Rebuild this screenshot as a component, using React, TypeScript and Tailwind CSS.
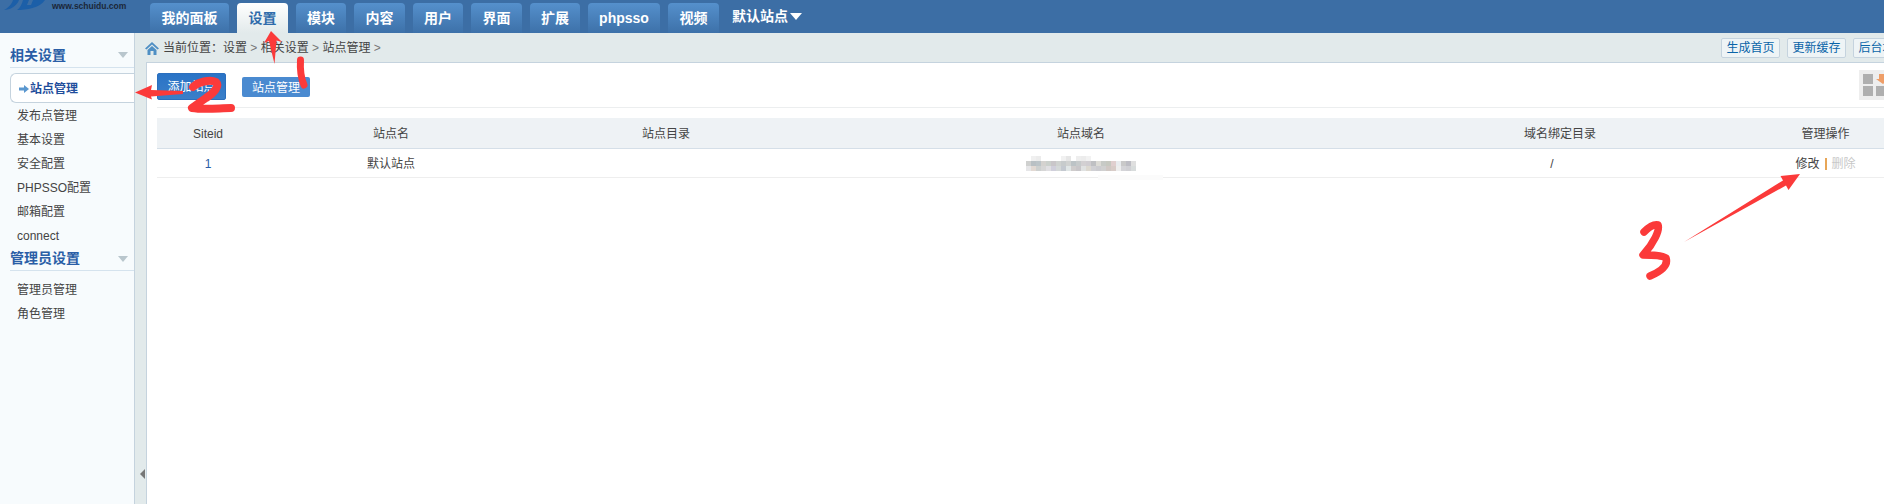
import React from "react";

const font = { fontFamily: '"Liberation Sans", "Noto Sans CJK SC", sans-serif' };

const tabs = [
  { label: "我的面板", w: "w-[79px]" },
  { label: "设置", w: "w-[51px]", active: true },
  { label: "模块", w: "w-[50px]" },
  { label: "内容", w: "w-[51px]" },
  { label: "用户", w: "w-[50px]" },
  { label: "界面", w: "w-[51px]" },
  { label: "扩展", w: "w-[50px]" },
  { label: "phpsso", w: "w-[72px]" },
  { label: "视频", w: "w-[51px]" },
];

const mosaic = [
  ["", "f0f0f0", "ececec", "", "", "", "", "f1f1f1", "e6e6e6", "", "eeeeee", "ececec", "f2f2f2", "", "", "", "", "", "", "", "", ""],
  ["cfd0cf", "b9c0c4", "bcc4c8", "d4d2cf", "cbd0cc", "c9c6c9", "cfd2d0", "c7cbcc", "d0d2d1", "bcc3c6", "c6cacb", "d3d0d2", "d0cdd1", "bfc0c3", "dcdbd6", "c7cac6", "c6c8c0", "e0cfcf", "e9ecef", "c9c9c9", "bdbdc4", "dfdfdf"],
  ["e6e6e8", "e2d9d3", "cdd0cf", "d6d6d6", "e0dfe2", "d0cfdb", "d4d8d8", "c4c9d0", "e0e6e6", "cfcccc", "c8c6c9", "e0e2e2", "dcd8d0", "d0d0d4", "ccccd0", "d0d0d0", "d0c8c4", "d8ccc8", "eeeeee", "d4d4d8", "d0d0d4", "d8dcdc"],
];

function Heading({ text, className }: { text: string; className: string }) {
  return (
    <div className={`flex justify-between items-center ml-[10px] border-b border-[#d5e3ee] ${className}`}>
      <span className="text-[14px] font-bold text-[#2a5ea6]">{text}</span>
      <span className="mr-[6px] w-0 h-0 border-x-[5.5px] border-x-transparent border-t-[6px] border-t-[#b9c6cd]" />
    </div>
  );
}

function Item({ text }: { text: string }) {
  return <div className="h-[24px] leading-[26px] pl-[17px] text-[12px] text-[#444]">{text}</div>;
}

const cols = "grid grid-cols-[102px_264px_286px_544px_414px_117px] w-[1727px] text-center text-[12px] text-[#444]";

export default function App() {
  return (
    <div style={font} className="relative w-[1884px] h-[504px] overflow-hidden bg-white flex flex-col">
      <header className="h-[33px] bg-[#3c6ea5] flex shrink-0">
        <div className="w-[150px] shrink-0 relative overflow-hidden">
          <svg className="absolute left-0 top-0" width="50" height="12" viewBox="0 0 50 12">
            <path d="M4 10 C10 10 17 6 19 0 L13 0 C12 4 8 8 4 10Z" fill="#1c5fa8" />
            <path d="M17 10 C26 10 40 8 45 0 L33 0 L31 5 L27 5 L29 0 L23 0 C22 4 20 8 17 10Z" fill="#1c5fa8" />
          </svg>
          <span className="absolute left-[52px] top-[1px] text-[8.5px] leading-[11px] font-bold text-[#1b2738] whitespace-nowrap">
            www.schuidu.com
          </span>
        </div>
        <nav className="flex items-end gap-[8px] h-full">
          {tabs.map((t) => (
            <div
              key={t.label}
              className={`${t.w} h-[30px] rounded-t-[4px] flex items-center justify-center text-[14px] font-bold ${
                t.active
                  ? "bg-gradient-to-b from-white to-[#e2eaeb] text-[#2f6cab]"
                  : "bg-gradient-to-b from-[#5590cc] to-[#3d71a9] text-white"
              }`}
            >
              {t.label}
            </div>
          ))}
          <div className="ml-[5px] h-[30px] pb-[4px] flex items-center gap-[2px] text-[14px] font-bold text-white">
            默认站点
            <span className="w-0 h-0 border-x-[6.5px] border-x-transparent border-t-[7px] border-t-white" />
          </div>
        </nav>
      </header>

      <div className="flex flex-1 min-h-0">
        <aside className="w-[135px] shrink-0 bg-[#f7fbfd] border-r border-[#c5d3de]">
          <Heading text="相关设置" className="h-[35px] pt-[10px]" />
          <div className="mt-[5px] ml-[10px] h-[30px] flex items-center bg-white border border-r-0 border-[#c5d3de] rounded-l-[6px] pl-[8px] pt-[1px] text-[12px] font-bold text-[#1f4e9c]">
            <svg width="10" height="8" viewBox="0 0 10 8" className="mr-[1px]">
              <path d="M0 2.5H5V0L10 4L5 8V5.5H0Z" fill="#5a97cf" />
            </svg>
            站点管理
          </div>
          <Item text="发布点管理" />
          <Item text="基本设置" />
          <Item text="安全配置" />
          <Item text="PHPSSO配置" />
          <Item text="邮箱配置" />
          <Item text="connect" />
          <Heading text="管理员设置" className="h-[24px]" />
          <div className="mt-[6px]">
            <Item text="管理员管理" />
            <Item text="角色管理" />
          </div>
        </aside>

        <div className="flex-1 min-w-0 flex flex-col bg-[#e2eaeb]">
          <div className="h-[29px] shrink-0 flex items-center justify-between pl-[10px]">
            <div className="flex items-center pt-[1px] text-[12px] text-[#444]">
              <svg width="14" height="13" viewBox="0 0 14 13" className="mr-[4px]">
                <path d="M7 0L14 6.5L12.5 7.5L7 2.5L1.5 7.5L0 6.5Z M2.5 8L7 4L11.5 8V13H8.5V9H5.5V13H2.5Z" fill="#4f8fc4" />
              </svg>
              <span>当前位置：设置 <span className="text-[#777]">&gt;</span> 相关设置 <span className="text-[#777]">&gt;</span> 站点管理 <span className="text-[#777]">&gt;</span></span>
            </div>
            <div className="flex gap-[7px] w-[163px] overflow-hidden shrink-0 text-[12px] text-[#0a64a8]">
              {["生成首页", "更新缓存", "后台地图"].map((b) => (
                <div key={b} className="shrink-0 w-[59px] h-[20px] leading-[18px] text-center bg-[#eef4f6] border border-[#c5d3de] rounded-[2px]">
                  {b}
                </div>
              ))}
            </div>
          </div>

          <div className="flex flex-1 min-h-0">
            <div className="w-[11px] shrink-0 flex items-end pb-[25px] justify-end pr-[1px]">
              <span className="w-0 h-0 border-y-[5px] border-y-transparent border-r-[5px] border-r-[#777]" />
            </div>
            <main className="flex-1 min-w-0 bg-white border-l border-t border-[#c5d3de] overflow-hidden">
              <div className="relative ml-[10px] pt-[10px] h-[45px] border-b border-[#eceeef] flex items-start gap-[16px]">
                <div className="w-[69px] h-[27px] flex items-center justify-center rounded-[2px] bg-gradient-to-b from-[#2a73c6] to-[#3a7fc8] border border-[#2b6fbe] pt-[1px] text-[12px] text-white">
                  添加站点
                </div>
                <div className="mt-[4px] w-[68px] h-[20px] flex items-center justify-center rounded-[2px] bg-[#4a8ad0] pt-[2px] text-[12px] text-white">
                  站点管理
                </div>
                <div className="absolute right-0 top-[7px] w-[25px] h-[30px] bg-[#eeeeee] overflow-hidden">
                  <svg width="25" height="30" viewBox="0 0 25 30">
                    <rect x="4" y="4" width="10" height="10" fill="#afafaf" />
                    <rect x="4" y="16" width="10" height="10" fill="#afafaf" />
                    <rect x="17" y="16" width="10" height="10" fill="#afafaf" />
                    <path d="M20 4H28V9H31L24 14L17 9H20Z" fill="#ee9e68" />
                  </svg>
                </div>
              </div>

              <div className="ml-[10px] mt-[10px]">
                <div className={`${cols} h-[31px] items-center bg-[#eef2f5] border-b border-[#d5dfe8] pt-[2px]`}>
                  <div>Siteid</div>
                  <div>站点名</div>
                  <div>站点目录</div>
                  <div>站点域名</div>
                  <div>域名绑定目录</div>
                  <div>管理操作</div>
                </div>
                <div className={`${cols} h-[29px] items-center border-b border-[#eeeeee] pt-[2px]`}>
                  <div className="text-[#2a5ea6]">1</div>
                  <div>默认站点</div>
                  <div />
                  <div className="flex justify-center">
                    <svg width="110" height="15" viewBox="0 0 110 15" className="-mt-[1px]">
                      {mosaic.map((row, r) =>
                        row.map((c, i) =>
                          c ? <rect key={`${r}-${i}`} x={i * 5} y={r * 5} width="5" height="5" fill={`#${c}`} /> : null
                        )
                      )}
                    </svg>
                  </div>
                  <div className="pr-[16px]">/</div>
                  <div className="flex items-center justify-center gap-[5px]">
                    <span>修改</span>
                    <span className="w-[2px] h-[12px] bg-[#e8a657]" />
                    <span className="text-[#c8c8c8]">删除</span>
                  </div>
                </div>
              </div>
            </main>
          </div>
        </div>
      </div>

      <svg className="absolute inset-0 pointer-events-none" width="1884" height="504" viewBox="0 0 1884 504" fill="none">
        <rect x="1098" y="175" width="65" height="5" fill="#fbfbfb" />
        <path d="M271 31L282 42L276.5 40.5L274.5 64L269 41L264 43Z" fill="#fb3a3a" />
        <path d="M300.5 60C300 68 301 78 304 85" stroke="#fb3a3a" strokeWidth="7" strokeLinecap="round" />
        <path d="M135 92.5L152 85L151 90L183 91L183 94L151 96.5L152 99.5Z" fill="#fb3a3a" />
        <path d="M193 87C198 82 210 79 216 82C220 86 214 93 206 98C200 102 196 105 192 108C205 110 220 108 231 108" stroke="#fb3a3a" strokeWidth="8" strokeLinecap="round" strokeLinejoin="round" />
        <path d="M1800 174L1780.5 176L1783 180.5L1684 242L1786 185.5L1788.5 190Z" fill="#fb3a3a" />
        <path d="M1644 232C1648 228 1654 224 1658 225C1660 230 1654 243 1643 255C1652 255 1662 255 1666 258C1668 264 1664 270 1650 276" stroke="#fb3a3a" strokeWidth="7.5" strokeLinecap="round" strokeLinejoin="round" />
      </svg>
    </div>
  );
}
